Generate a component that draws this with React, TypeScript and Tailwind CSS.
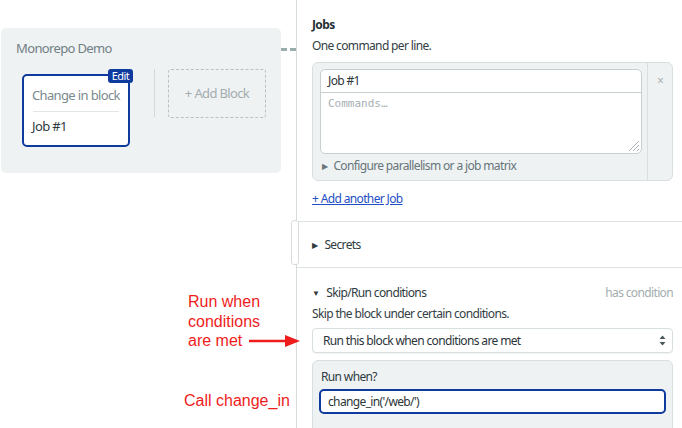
const font = { fontFamily: '"Noto Sans", "Open Sans", sans-serif' }

function BlockCard() {
  return (
    <div className="relative mt-[5px] w-[108px] h-[73px] rounded-[5px] border-2 border-[#0e3b9d] bg-white px-[8px]">
      {/* edit badge */}
      <span className="absolute -top-[7px] -right-[5px] h-[14px] rounded-[3px] bg-[#0e3b9d] px-[4px] text-[11px] leading-[14px] text-white">
        Edit
      </span>
      <div className="h-[35px] pt-[11px] text-[13px] leading-[16px] text-[#7a8a8e] whitespace-nowrap">Change in block</div>
      <div className="mx-[1px] border-t border-[#e1e6e7]" />
      <div className="pt-[6px] text-[13px] leading-[16px] text-[#2f3b3e]">Job #1</div>
    </div>
  )
}

function Canvas() {
  return (
    <div className="w-[296px] shrink-0 pt-[28px]">
      <div className="flex items-start">
        <div className="ml-[1px] w-[280px] h-[145px] rounded-[5px] bg-[#eff2f3] pt-[12px] px-[15px]">
          <div className="text-[13px] leading-[16px] text-[#6f7f84]">Monorepo Demo</div>
          <div className="mt-[13px] flex items-start pl-[6px]">
            <BlockCard />
            <div className="ml-[24px] mr-[13px] w-px h-[48px] bg-[#d3d9db]" />
            <div className="flex w-[98px] h-[49px] items-center justify-center rounded-[3px] border border-dashed border-[#b8c1c4] text-[13px] text-[#a3adb0]">
              + Add Block
            </div>
          </div>
        </div>
        <div className="mt-[20px] w-[15px] border-t-[3px] border-dashed border-[#9aabab]" />
      </div>
    </div>
  )
}

function Panel() {
  return (
    <div className="relative flex-1 border-l border-[#d6dcdd] bg-white">
      {/* resize handle */}
      <div className="absolute -left-[6px] top-[220px] w-[8px] h-[45px] rounded-[3px] border border-[#d6dcdd] bg-white" />

      <div className="pl-[15px] pr-[9px] pt-[17px] pb-[14px]">
        <div className="text-[12px] font-bold leading-[16px] text-[#263034]">Jobs</div>
        <div className="mt-[5px] text-[12px] leading-[16px] text-[#334044]">One command per line.</div>

        <div className="mt-[8px] flex h-[119px] rounded-[6px] border border-[#d8dfe0] bg-[#eff2f3]">
          <div className="flex-1 pl-[7px] pr-[5px] pt-[6px]">
            <div className="relative h-[85px] rounded-[5px] border border-[#c7cfd1] bg-white">
              <div className="h-[23px] border-b border-[#c7cfd1] px-[7px] text-[12px] leading-[22px] text-[#2c3538]">Job #1</div>
              <div className="px-[7px] pt-[4px] text-[11px] leading-[14px] tracking-normal text-[#a6b0b3]" style={{ fontFamily: '"DejaVu Sans Mono", monospace' }}>
                Commands…
              </div>
              <svg className="absolute right-[1px] bottom-[1px]" width="14" height="14" viewBox="0 0 14 14">
                <path d="M13 3 L3 13 M13 7 L7 13 M13 11 L11 13" stroke="#a9b3b6" strokeWidth="1" />
              </svg>
            </div>
            <div className="mt-[4px] flex items-center text-[12px] leading-[16px] text-[#667579]">
              <span className="mr-[6px] ml-[2px] text-[8px] text-[#667579]">▶</span>
              Configure parallelism or a job matrix
            </div>
          </div>
          <div className="w-[25px] border-l border-[#d8dfe0] pt-[10px] text-center text-[12px] leading-[16px] text-[#a6b0b3]">×</div>
        </div>

        <div className="mt-[10px] text-[12px] leading-[16px] text-[#1f4fc4] underline">+ Add another Job</div>
      </div>

      <div className="flex h-[47px] items-center border-t border-b border-[#dde2e3] pl-[15px] text-[12px] text-[#2f3b3e]">
        <span className="mr-[7px] text-[8px]">▶</span>
        Secrets
      </div>

      <div className="pl-[15px] pr-[9px] pt-[17px]">
        <div className="flex items-center justify-between text-[12px] leading-[16px]">
          <div className="flex items-center text-[#2f3b3e]">
            <span className="mr-[7px] text-[8px]">▼</span>
            Skip/Run conditions
          </div>
          <span className="text-[#a3adb0]">has condition</span>
        </div>
        <div className="mt-[5px] text-[12px] leading-[16px] text-[#334044]">Skip the block under certain conditions.</div>
        <div className="mt-[6px] flex h-[25px] items-center justify-between rounded-[4px] border border-[#d8dfe0] bg-white pl-[10px] pr-[6px] shadow-[0_1px_1px_rgba(0,0,0,0.05)] text-[12px] text-[#2c3538]">
          Run this block when conditions are met
          <svg width="7" height="11" viewBox="0 0 7 11">
            <polygon points="3.5,0.5 6.5,4 0.5,4" fill="#4a5659" />
            <polygon points="0.5,7 6.5,7 3.5,10.5" fill="#4a5659" />
          </svg>
        </div>
        <div className="mt-[7px] h-[80px] rounded-t-[6px] border border-[#d8dfe0] bg-[#eff2f3] px-[6px] pt-[8px]">
          <div className="text-[12px] leading-[16px] text-[#2f3b3e] pl-[2px]">Run when?</div>
          <div className="mt-[4px] flex h-[25px] items-center rounded-[5px] border-2 border-[#0e3b9d] bg-white px-[7px] text-[12px] text-[#2c3538]">
            change_in('/web/')
          </div>
        </div>
      </div>
    </div>
  )
}

function Annotations() {
  const red = { fontFamily: '"Liberation Sans", Arial, sans-serif' }
  return (
    <div className="tracking-normal">
      <div className="absolute left-[188px] top-[292px] text-[16px] leading-[19.5px] text-[#ee1c1c]" style={red}>
        Run when<br />conditions<br />are met
      </div>
      <svg className="absolute left-[249px] top-[334px]" width="52" height="14" viewBox="0 0 52 14">
        <line x1="0" y1="7" x2="38" y2="7" stroke="#ee1c1c" strokeWidth="2.5" />
        <polygon points="36,1 51,7 36,13" fill="#ee1c1c" />
      </svg>
      <div className="absolute left-[184px] top-[391px] text-[16px] leading-[19px] text-[#ee1c1c]" style={red}>
        Call change_in
      </div>
    </div>
  )
}

export default function App() {
  return (
    <div className="relative flex h-[428px] w-[682px] overflow-hidden bg-white tracking-[-0.04em]" style={font}>
      <Canvas />
      <Panel />
      <Annotations />
    </div>
  )
}
